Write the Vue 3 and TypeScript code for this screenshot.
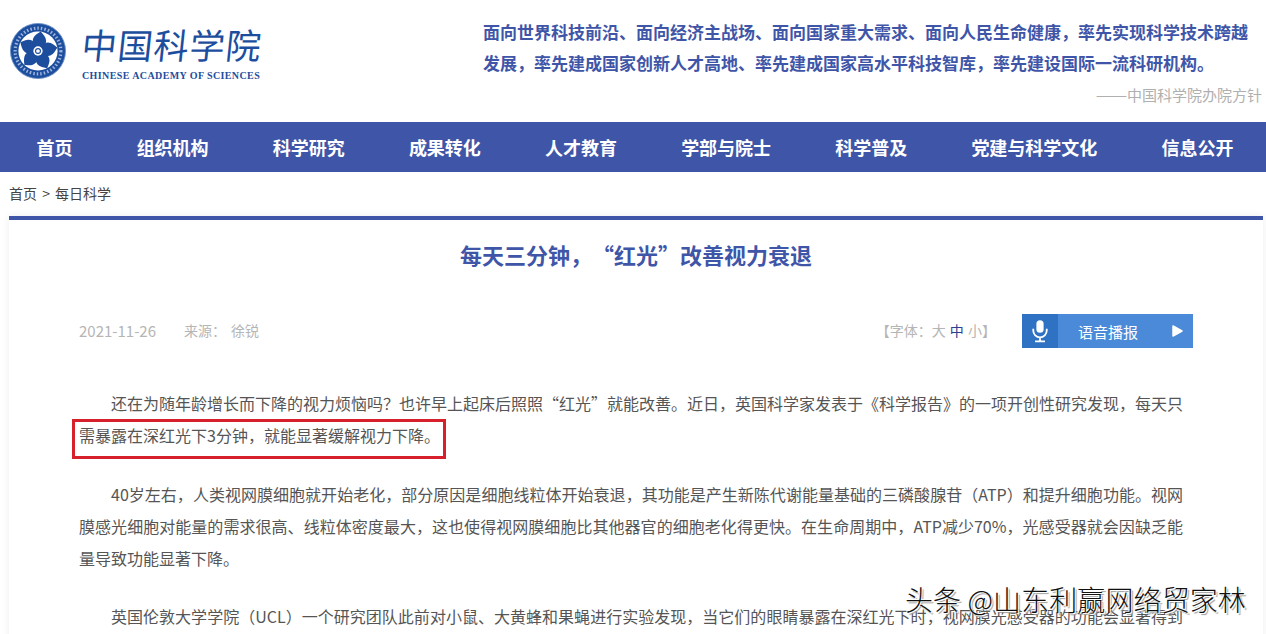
<script setup lang="ts">
const navItems = ["首页", "组织机构", "科学研究", "成果转化", "人才教育", "学部与院士", "科学普及", "党建与科学文化", "信息公开"];
const petals = [8, 80, 152, 224, 296];
</script>

<template>
  <div class="page">
    <header class="top">
      <div class="logo">
        <svg class="emblem" viewBox="0 0 60 60" width="56" height="56">
          <circle cx="30" cy="30" r="29.5" fill="#1d4e9e" />
          <circle cx="30" cy="30" r="29.5" fill="none" stroke="#6f93c8" stroke-width="1" />
          <circle cx="30" cy="30" r="24.5" fill="none" stroke="#9db5dc" stroke-width="3.5" stroke-dasharray="1.6 2.2" />
          <circle cx="30" cy="30" r="21" fill="#fff" />
          <path
            v-for="a in petals"
            :key="a"
            d="M30 31C27 26 20 22 24 15C26 12 29 10 30 9C31 10 34 12 36 15C40 22 33 26 30 31Z"
            fill="#1d4e9e"
            :transform="`rotate(${a} 30 30)`"
          />
          <circle cx="30" cy="30" r="5" fill="#fff" />
          <circle cx="30" cy="30" r="2.6" fill="none" stroke="#1d4e9e" stroke-width="1.2" />
        </svg>
        <div class="logo-text">
          <div class="logo-cn">中国科学院</div>
          <div class="logo-en">CHINESE ACADEMY OF SCIENCES</div>
        </div>
      </div>
      <div class="motto">
        <p>面向世界科技前沿、面向经济主战场、面向国家重大需求、面向人民生命健康，率先实现科学技术跨越发展，率先建成国家创新人才高地、率先建成国家高水平科技智库，率先建设国际一流科研机构。</p>
        <div class="motto-src"><span class="dash">——</span>中国科学院办院方针</div>
      </div>
    </header>

    <nav class="nav">
      <a v-for="item in navItems" :key="item">{{ item }}</a>
    </nav>

    <div class="crumb">首页 &gt; 每日科学</div>

    <main class="card">
      <h1>每天三分钟，“红光”改善视力衰退</h1>
      <div class="meta">
        <div class="meta-left">
          <span class="date">2021-11-26</span>
          <span>来源：</span>
          <span>徐锐</span>
        </div>
        <div class="meta-right">
          <div class="font-size">【字体：大 <b>中</b> 小】</div>
          <div class="speak">
            <span class="mic">
              <svg viewBox="0 0 20 26" width="18" height="24" fill="none" stroke="#fff" stroke-width="2">
                <rect x="6" y="1" width="8" height="14" rx="4" fill="#fff" stroke="none" />
                <path d="M2.5 10.5v2a7.5 7.5 0 0 0 15 0v-2M10 20v4M4.5 24.5h11" />
              </svg>
            </span>
            <span class="speak-label">语音播报</span>
            <svg class="play" viewBox="0 0 11 12" width="11" height="12">
              <path d="M1 1L10 6L1 11Z" fill="#fff" stroke="#fff" stroke-width="1.5" stroke-linejoin="round" />
            </svg>
          </div>
        </div>
      </div>

      <div class="article">
        <p class="lead">
          还在为随年龄增长而下降的视力烦恼吗？也许早上起床后照照“红光”就能改善。近日，英国科学家发表于《科学报告》的一项开创性研究发现，每天只需暴露在深红光下3分钟，就能显著缓解视力下降。
          <span class="mark"></span>
        </p>
        <p class="second">40岁左右，人类视网膜细胞就开始老化，部分原因是细胞线粒体开始衰退，其功能是产生新陈代谢能量基础的三磷酸腺苷（ATP）和提升细胞功能。视网膜感光细胞对能量的需求很高、线粒体密度最大，这也使得视网膜细胞比其他器官的细胞老化得更快。在生命周期中，ATP减少70%，光感受器就会因缺乏能量导致功能显著下降。</p>
        <p>英国伦敦大学学院（UCL）一个研究团队此前对小鼠、大黄蜂和果蝇进行实验发现，当它们的眼睛暴露在深红光下时，视网膜光感受器的功能会显著得到改善。</p>
      </div>
    </main>

    <div class="watermark">头条 @山东利赢网络贸家林</div>
  </div>
</template>

<style>
html, body { overflow: hidden; background: #fff; }
</style>

<style scoped>
.page {
  position: relative;
  height: 634px;
  overflow: hidden;
  background: #fff;
  font-family: "Noto Sans CJK SC", "Liberation Sans", sans-serif;
  text-spacing-trim: space-all;
}
.top {
  display: flex;
  justify-content: space-between;
  height: 122px;
}
.logo {
  display: flex;
  align-items: flex-start;
  gap: 16px;
  padding: 23px 0 0 10px;
}
.emblem { flex: none; }
.logo-text { color: #1d4e9e; }
.logo-cn {
  font-size: 35px;
  font-weight: 400;
  line-height: 42px;
  letter-spacing: 1px;
  white-space: nowrap;
  transform: skewX(-6deg);
}
.logo-en {
  margin-top: 5px;
  font-family: "Liberation Serif", serif;
  font-size: 10px;
  font-weight: 700;
  line-height: 12px;
  letter-spacing: 0.4px;
  white-space: nowrap;
}
.motto {
  width: 783px;
  padding-top: 16px;
  color: #3f56a8;
}
.motto p {
  width: 766px;
  margin: 0;
  font-size: 17px;
  font-weight: 700;
  line-height: 31px;
}
.motto-src {
  margin-top: 7px;
  padding-right: 4px;
  font-size: 15px;
  line-height: 20px;
  text-align: right;
  color: #b0b0b0;
}
.dash {
  display: inline-block;
  transform: scaleX(1.25);
  transform-origin: right center;
}
.nav {
  display: flex;
  justify-content: space-between;
  height: 50px;
  padding: 0 32.5px 0 36.5px;
  background: #3f56a8;
}
.nav a {
  color: #fff;
  font-size: 18px;
  font-weight: 700;
  line-height: 51px;
}
.crumb {
  height: 44px;
  padding-left: 9px;
  font-size: 14px;
  line-height: 43px;
  word-spacing: 2px;
  color: #444;
}
.card {
  width: 1254px;
  margin-left: 9px;
  box-sizing: border-box;
  padding: 0 70px;
  border-top: 4px solid #3f56a8;
  box-shadow: 0 0 8px rgba(0, 0, 0, 0.07);
}
h1 {
  margin: 18px 0 0;
  font-size: 22px;
  font-weight: 700;
  line-height: 32px;
  text-align: center;
  color: #3f56a8;
}
.meta {
  display: flex;
  justify-content: space-between;
  align-items: center;
  height: 34px;
  margin-top: 44px;
  font-size: 14px;
  color: #b5b5b5;
}
.meta-left {
  display: flex;
  align-items: center;
  gap: 5px;
  margin-top: -2px;
}
.date {
  margin-right: 23px;
  font-size: 15px;
}
.meta-right {
  display: flex;
  align-items: center;
  gap: 26px;
}
.font-size {
  margin-top: -2px;
  word-spacing: 1px;
}
.font-size b {
  font-weight: 400;
  color: #2d3f8f;
}
.speak {
  display: flex;
  align-items: center;
  width: 171px;
  height: 34px;
  background: #4a8ad8;
  color: #fff;
}
.mic {
  display: flex;
  align-items: center;
  justify-content: center;
  width: 36px;
  height: 34px;
  background: #2f72c4;
}
.speak-label {
  margin-left: 20px;
  font-size: 15px;
}
.play { margin-left: 34px; }
.article {
  margin: 39px 10px 0 0;
  font-size: 16px;
  line-height: 32px;
  color: #555;
}
.article p {
  margin: 0 0 27px;
  text-indent: 32px;
  text-align: justify;
}
.article .second { margin-bottom: 26px; }
.lead { position: relative; }
.mark {
  position: absolute;
  left: -7px;
  top: 32px;
  width: 374px;
  height: 40px;
  box-sizing: border-box;
  border: 3px solid #d6202c;
}
.watermark {
  position: absolute;
  left: 905px;
  top: 579px;
  font-size: 28px;
  font-weight: 300;
  line-height: 40px;
  letter-spacing: 0.1px;
  white-space: nowrap;
  color: #111;
  text-shadow: 1px 1px 0 #fff, -1px -1px 0 #fff, 2px 2px 1px #999;
}
</style>
